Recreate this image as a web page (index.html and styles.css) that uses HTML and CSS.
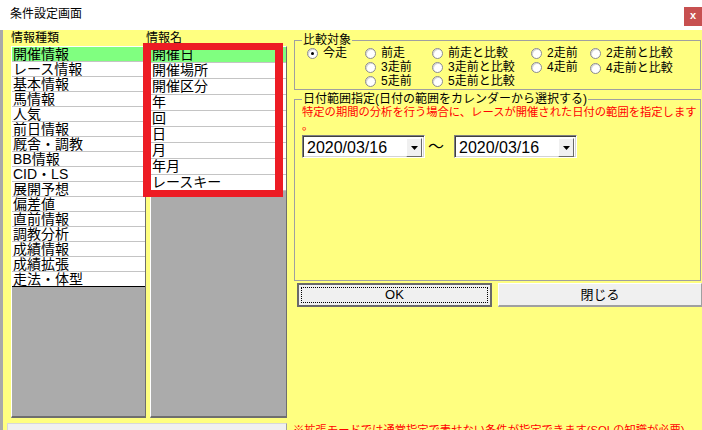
FILE: index.html
```html
<!DOCTYPE html>
<html lang="ja">
<head>
<meta charset="utf-8">
<title>条件設定画面</title>
<link rel="stylesheet" href="styles.css">
</head>
<body>
<div class="window">
  <div class="titlebar">
    <span class="title">条件設定画面</span>
    <span class="close">x</span>
  </div>
  <div class="client">
    <div class="main">
      <div class="col col-kind">
        <div class="col-head">情報種類</div>
        <div class="listbox list-kind">
          <div class="item is-selected">開催情報</div>
          <div class="item">レース情報</div>
          <div class="item">基本情報</div>
          <div class="item">馬情報</div>
          <div class="item">人気</div>
          <div class="item">前日情報</div>
          <div class="item">厩舎・調教</div>
          <div class="item">BB情報</div>
          <div class="item">CID・LS</div>
          <div class="item">展開予想</div>
          <div class="item">偏差値</div>
          <div class="item">直前情報</div>
          <div class="item">調教分析</div>
          <div class="item">成績情報</div>
          <div class="item">成績拡張</div>
          <div class="item item-last">走法・体型</div>
        </div>
      </div>
      <div class="col col-name">
        <div class="col-head col-head-shift">情報名</div>
        <div class="listbox list-name">
          <div class="item is-selected">開催日</div>
          <div class="item">開催場所</div>
          <div class="item">開催区分</div>
          <div class="item">年</div>
          <div class="item">回</div>
          <div class="item">日</div>
          <div class="item">月</div>
          <div class="item">年月</div>
          <div class="item">レースキー</div>
        </div>
      </div>
      <div class="col col-right">
        <fieldset class="group group-compare">
          <legend class="group-label">比較対象</legend>
          <div class="opts">
            <span class="opt opt-tall is-checked"><span class="opt-mark"></span>今走</span>
            <span class="opt"><span class="opt-mark"></span>前走</span>
            <span class="opt"><span class="opt-mark"></span>前走と比較</span>
            <span class="opt"><span class="opt-mark"></span>2走前</span>
            <span class="opt"><span class="opt-mark"></span>2走前と比較</span>
            <span class="opt"><span class="opt-mark"></span>3走前</span>
            <span class="opt"><span class="opt-mark"></span>3走前と比較</span>
            <span class="opt"><span class="opt-mark"></span>4走前</span>
            <span class="opt opt-low"><span class="opt-mark"></span>4走前と比較</span>
            <span class="opt"><span class="opt-mark"></span>5走前</span>
            <span class="opt"><span class="opt-mark"></span>5走前と比較</span>
          </div>
        </fieldset>
        <fieldset class="group group-date">
          <legend class="group-label">日付範囲指定(日付の範囲をカレンダーから選択する)</legend>
          <div class="date-body">
            <p class="date-note">特定の期間の分析を行う場合に、レースが開催された日付の範囲を指定します<br>。</p>
            <div class="date-row">
              <div class="combo">
                <span class="combo-value">2020/03/16</span>
                <span class="combo-btn"><svg width="7" height="4" viewBox="0 0 7 4"><path d="M0 0h7L3.5 4z" fill="#000"/></svg></span>
              </div>
              <span class="tilde">〜</span>
              <div class="combo">
                <span class="combo-value">2020/03/16</span>
                <span class="combo-btn"><svg width="7" height="4" viewBox="0 0 7 4"><path d="M0 0h7L3.5 4z" fill="#000"/></svg></span>
              </div>
            </div>
          </div>
        </fieldset>
        <div class="actions">
          <div class="btn btn-default"><span class="btn-focus">OK</span></div>
          <div class="btn btn-close"><span class="btn-text">閉じる</span></div>
        </div>
      </div>
    </div>
    <div class="footer">
      <div class="btn mode-btn">拡張モード(条件を直接指定)ON</div>
      <p class="note">※拡張モードでは通常指定で表せない条件が指定できます(SQLの知識が必要)</p>
    </div>
  </div>
  <div class="annotation"></div>
</div>
</body>
</html>
```

FILE: styles.css
```css
* {
  box-sizing: border-box;
}

html,
body {
  margin: 0;
  padding: 0;
}

body {
  width: 702px;
  height: 430px;
  overflow: hidden;
  background: #ffff80;
  color: #000;
  font-family: "Liberation Sans", "Noto Sans CJK JP", sans-serif;
  font-size: 12px;
}

.window {
  position: relative;
  width: 702px;
  height: 430px;
  display: flex;
  flex-direction: column;
}

/* title bar */
.titlebar {
  flex: none;
  height: 30px;
  background: #fff;
  display: flex;
  align-items: flex-start;
}

.title {
  margin: 6px 0 0 10px;
  font-size: 12px;
  line-height: 16px;
}

.close {
  margin: 7px 0 0 auto;
  width: 18px;
  height: 19px;
  background: #c75050;
  color: #fff;
  font-size: 11px;
  font-weight: bold;
  line-height: 17px;
  text-align: center;
}

/* client area */
.client {
  flex: 1;
  background: #ffff80;
  border-left: 3px solid #a9a9a9;
  display: flex;
  flex-direction: column;
}

.main {
  flex: none;
  height: 388px;
  display: flex;
  padding-left: 8px;
}

.col {
  display: flex;
  flex-direction: column;
}

.col-kind {
  width: 135px;
}

.col-name {
  width: 137px;
  margin-left: 4px;
}

.col-head {
  flex: none;
  height: 16px;
  padding-top: 1px;
  font-size: 12px;
  line-height: 15px;
  white-space: nowrap;
}

.col-head-shift {
  margin-left: -4px;
}

.listbox {
  flex: 1;
  background: #ababab;
  border-top: 1px solid #fff;
  border-left: 1px solid #fff;
  border-right: 1px solid #6e6e6e;
  border-bottom: 2px solid #6e6e6e;
  overflow: hidden;
}

.item {
  background: #fff;
  border-bottom: 1px solid #c4c4c4;
  padding-left: 1px;
  font-size: 14px;
  white-space: nowrap;
}

.list-kind .item {
  height: 15px;
  line-height: 14px;
}

.list-kind .item-last {
  border-bottom-color: #000;
}

.list-name .item {
  height: 16px;
  line-height: 15px;
}

.item.is-selected {
  background: #80ff80;
}

/* right column */
.col-right {
  flex: 1;
  margin-left: 7px;
}

.group {
  margin: 0 1px 0 0;
  padding: 0;
  min-width: 0;
  border: 1px solid #a0a0a0;
}

.group-label {
  margin-left: 7px;
  padding: 0 1px;
  font-size: 12px;
  line-height: 12px;
  white-space: nowrap;
}

.group-compare {
  margin-top: 4px;
  padding-bottom: 1px;
}

.opts {
  display: grid;
  grid-template-columns: 58px 67px 99px 59px 1fr;
  grid-auto-rows: 14px;
  margin: 0 0 0 12px;
}

.opt {
  display: flex;
  align-items: center;
  gap: 5px;
  font-size: 12px;
  line-height: 14px;
  white-space: nowrap;
}

.opt-tall {
  grid-row: span 3;
  align-self: start;
  height: 14px;
}

.opt-low {
  padding-top: 2px;
}

.opt-mark {
  position: relative;
  flex: none;
  width: 11px;
  height: 11px;
  border-radius: 50%;
  background: #fff;
  border: 1px solid #8c8c8c;
  box-shadow: inset 1px 1px 0 #d8d8d8;
}

.opt.is-checked .opt-mark::after {
  content: "";
  position: absolute;
  left: 3px;
  top: 3px;
  width: 3px;
  height: 3px;
  border-radius: 50%;
  background: #000;
}

.group-date {
  margin-top: 3px;
  height: 188px;
}

.date-body {
  padding-left: 7px;
}

.date-note {
  margin: 0;
  color: #f00;
  font-size: 11.3px;
  line-height: 14px;
  white-space: nowrap;
}

.date-row {
  display: flex;
  align-items: center;
  margin-top: 2px;
}

.combo {
  display: flex;
  width: 123px;
  height: 23px;
  background: #fff;
  border-top: 1px solid #808080;
  border-left: 1px solid #808080;
  border-right: 1px solid #fff;
  border-bottom: 1px solid #fff;
  box-shadow: inset 1px 1px 0 #404040, inset -1px -1px 0 #d4d4d4;
  padding: 2px;
}

.combo-value {
  flex: 1;
  padding-left: 2px;
  font-size: 16px;
  line-height: 19px;
}

.combo-btn {
  flex: none;
  width: 16px;
  height: 19px;
  display: flex;
  align-items: center;
  justify-content: center;
  background: #f0f0f0;
  border-top: 1px solid #fff;
  border-left: 1px solid #fff;
  border-right: 1px solid #696969;
  border-bottom: 1px solid #696969;
}

.tilde {
  width: 17px;
  margin: 0 9px 0 3px;
  font-size: 16px;
  line-height: 20px;
}

.actions {
  display: flex;
  gap: 6px;
  margin: 2px 0 0 3px;
}

.btn {
  background: #f0f0f0;
  font-size: 13px;
  text-align: center;
}

.btn-default {
  width: 195px;
  height: 24px;
  border: 2px solid #6a6a6a;
  padding: 2px;
}

.btn-focus {
  display: block;
  height: 16px;
  border: 1px dotted #000;
  line-height: 14px;
}

.btn-close {
  width: 204px;
  height: 24px;
  border-top: 1px solid #fff;
  border-left: 1px solid #fff;
  border-right: 1px solid #a0a0a0;
  border-bottom: 2px solid #a0a0a0;
}

.btn-text {
  display: block;
  line-height: 21px;
}

/* footer */
.footer {
  display: flex;
  margin-top: 5px;
}

.mode-btn {
  flex: none;
  width: 280px;
  height: 24px;
  margin-left: 4px;
  border-top: 1px solid #d8d8d8;
  border-left: 1px solid #d8d8d8;
  border-right: 1px solid #a0a0a0;
  font-size: 12px;
  line-height: 24px;
  padding-top: 4px;
}

.note {
  margin: 0 0 0 6px;
  color: #f00;
  font-size: 11.3px;
  line-height: 14px;
  white-space: nowrap;
}

/* red annotation drawn over the list */
.annotation {
  position: absolute;
  left: 143px;
  top: 43px;
  width: 140px;
  height: 154px;
  border-style: solid;
  border-color: #ed1c24;
  border-width: 7px 8px;
  pointer-events: none;
}
```
